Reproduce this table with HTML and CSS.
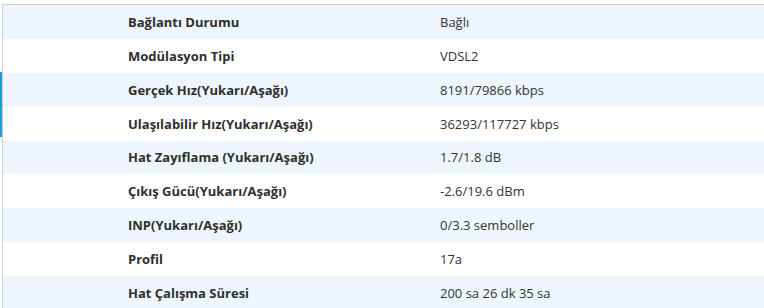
FILE: index.html
```html
<!DOCTYPE html>
<html lang="tr">
<head>
<meta charset="utf-8">
<link rel="stylesheet" href="styles.css">
</head>
<body>
<div class="frame">
  <div class="accent"></div>
  <div class="panel">
    <table class="info">
      <tr><th>Bağlantı Durumu</th><td>Bağlı</td></tr>
      <tr><th>Modülasyon Tipi</th><td>VDSL2</td></tr>
      <tr><th>Gerçek Hız(Yukarı/Aşağı)</th><td>8191/79866 kbps</td></tr>
      <tr><th>Ulaşılabilir Hız(Yukarı/Aşağı)</th><td>36293/117727 kbps</td></tr>
      <tr><th>Hat Zayıflama (Yukarı/Aşağı)</th><td>1.7/1.8 dB</td></tr>
      <tr><th>Çıkış Gücü(Yukarı/Aşağı)</th><td>-2.6/19.6 dBm</td></tr>
      <tr><th>INP(Yukarı/Aşağı)</th><td>0/3.3 semboller</td></tr>
      <tr><th>Profil</th><td>17a</td></tr>
      <tr><th>Hat Çalışma Süresi</th><td>200 sa 26 dk 35 sa</td></tr>
    </table>
  </div>
</div>
</body>
</html>
```
FILE: styles.css
```css
html, body {
  margin: 0;
  padding: 0;
  background: #ffffff;
}
body {
  font-family: "Open Sans", "Noto Sans", sans-serif;
  font-size: 13px;
  color: #333333;
  overflow: hidden;
}
.frame {
  position: relative;
  padding-top: 4px;
  height: 304px;
  overflow: hidden;
}
.accent {
  position: absolute;
  left: 0;
  top: 72px;
  width: 2px;
  height: 65px;
  background: #1a9fdc;
}
.panel {
  margin-left: 2px;
  border-left: 1px solid #cfcfcf;
  border-top: 1px solid #d0d0d0;
  height: 303px;
  overflow: hidden;
}
.info {
  width: 100%;
  border-collapse: collapse;
}
.info tr {
  height: 33.875px;
}
.info tr:nth-child(odd) {
  background: #eef6fd;
}
.info th {
  text-align: left;
  font-weight: 700;
  padding: 0 0 0 125px;
  width: 312px;
  color: #2f2f2f;
}
.info td {
  padding: 0;
  color: #333333;
}
```
